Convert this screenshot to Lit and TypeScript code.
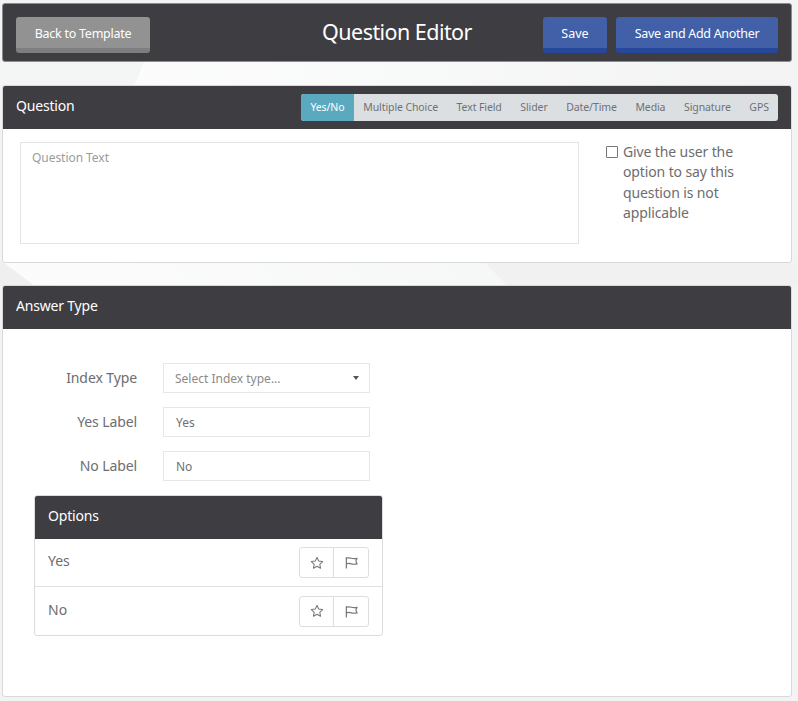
import { LitElement, html, css } from "lit";
import { customElement } from "lit/decorators.js";

const star = html`<svg class="ic" viewBox="0 0 16 16" width="14" height="14" fill="none" stroke="#777" stroke-width="1.2" stroke-linejoin="round"><path d="M8 1.6l1.95 4.2 4.55.55-3.35 3.1.9 4.500L8 11.700l-4.050 2.250.9-4.500L1.500 6.350l4.550-.550z"/></svg>`;
const flag = html`<svg class="ic" viewBox="0 0 16 16" width="15" height="15" fill="none" stroke="#777" stroke-width="1.3" stroke-linejoin="round"><path d="M2.500 2.500v12M2.500 3.500c2-1 4-.5 5.500 0s3.500.5 6 0c-.8 1-1.200 2-1.200 3s.4 2 1.200 3c-2.500.5-4.500.5-6 0s-3.500-1-5.500 0"/></svg>`;

@customElement("app-root")
export class AppRoot extends LitElement {
  static styles = css`
    :host {
      display: block;
      width: 798px;
      height: 701px;
      overflow: hidden;
      box-sizing: border-box;
      padding: 3px 6px 0 2px;
      font-family: "Noto Sans", "Open Sans", sans-serif;
      color: #6a6a6c;
      background-color: #f3f3f3;
      background-repeat: no-repeat;
      background-image:
        linear-gradient(112deg, #f4f5f5 0 133px, transparent 134px),
        linear-gradient(90deg, #fcfcfc 120px, #f8f9f9 400px, #f3f3f3 798px),
        linear-gradient(217deg, transparent 33px, #efefef 34px),
        linear-gradient(46deg, #fcfcfc 0, #f6f7f7 364px, #f1f1f1 366px, #f1f1f1 100%);
      background-size: 798px 23px, 798px 23px, 60px 23px, 798px 23px;
      background-position: 0 62px, 0 62px, 0 263px, 0 263px;
    }
    * { box-sizing: border-box; }
    .panel {
      background: #fff;
      border: 1px solid #d9d9d9;
      border-radius: 3px;
      overflow: hidden;
    }
    .top {
      height: 59px;
      background: #3e3d42;
      border-color: #8c8c8f;
      display: grid;
      grid-template-columns: 1fr auto 1fr;
      align-items: center;
      padding: 5px 13px 0;
      margin-bottom: 23px;
    }
    .top h1 {
      margin: -6px 0 0;
      font-size: 21.5px;
      font-weight: 400;
      color: #fff;
      line-height: 1;
      letter-spacing: -0.55px;
    }
    .left { display: flex; }
    .right { display: flex; justify-content: flex-end; gap: 9px; }
    .btn {
      height: 36px;
      border: 0;
      border-bottom: 5px solid;
      border-radius: 3px;
      font: inherit;
      font-size: 12.5px;
      color: #fff;
      padding: 1px 0 0;
      display: flex;
      align-items: center;
      justify-content: center;
      letter-spacing: -0.3px;
    }
    .grey { background: #929292; border-color: #7e7e7e; width: 134px; letter-spacing: -0.25px; }
    .blue { background: #4160a8; border-color: #27479b; width: 162px; }
    .blue.small { width: 64px; letter-spacing: 0; }
    .head {
      background: #3e3d42;
      color: #fff;
      display: flex;
      align-items: center;
      justify-content: space-between;
      font-size: 14px;
      height: 43px;
      padding: 0 13px;
      letter-spacing: -0.2px;
    }
    .head > span { padding-bottom: 4px; }
    .q { height: 178px; margin-bottom: 22px; }
    .tabs {
      display: flex;
      background: #dcdfe2;
      border-radius: 3px;
      height: 27px;
      width: 477px;
      font-size: 10.5px;
      color: #6f7175;
      align-items: center;
      overflow: hidden;
      letter-spacing: -0.1px;
    }
    .tab { flex: none; padding: 0 9.300px; white-space: nowrap; line-height: 27px; }
    .tab.on { background: #5aa9bf; color: #fff; width: 53px; padding: 0; text-align: center; }
    .qbody { display: flex; padding: 13px 18px 0 17px; gap: 27px; }
    .ta {
      width: 559px;
      height: 102px;
      border: 1px solid #e4e4e4;
      font-size: 12px;
      color: #9b9b9b;
      padding: 7px 11px;
      line-height: 16px;
      flex: none;
      letter-spacing: -0.05px;
    }
    .check { display: flex; gap: 5px; font-size: 14px; line-height: 20.400px; width: 134px; color: #6d6d6f; flex: none; letter-spacing: -0.12px; }
    .box { width: 12px; height: 12px; border: 1px solid #777; border-radius: 1px; flex: none; margin-top: 4px; }
    .a { height: 412px; }
    .abody { padding: 34px 31px 0; }
    .row { display: flex; align-items: center; margin-bottom: 14px; height: 30px; }
    .row label { width: 103px; text-align: right; font-size: 14px; color: #6d6d6f; letter-spacing: -0.1px; padding-bottom: 1px; }
    .field {
      margin-left: 26px;
      width: 207px;
      height: 30px;
      border: 1px solid #e6e6e6;
      display: flex;
      align-items: center;
      justify-content: space-between;
      padding: 0 11px 0 12px;
      font-size: 12px;
      color: #707072;
    }
    .field.ph { color: #8a8a8c; padding-left: 11px; }
    .caret { width: 0; height: 0; border: 3.500px solid transparent; border-top: 4px solid #555; border-bottom: 0; margin-right: -1px; }
    .options { width: 349px; height: 141px; border-color: #dcdcdc; }
    .opt {
      display: flex;
      align-items: center;
      justify-content: space-between;
      padding: 0 13px;
      font-size: 14px;
      height: 48px;
      border-bottom: 1px solid #e0e0e0;
      color: #6d6d6f;
    }
    .opt:last-child { border-bottom: 0; }
    .opt > span { padding-bottom: 4px; }
    .group { display: flex; border: 1px solid #dedede; border-radius: 3px; height: 31px; }
    .group div { width: 34px; display: flex; align-items: center; justify-content: center; }
    .group div:first-child { width: 33px; }
    .group div + div { border-left: 1px solid #dedede; width: 35px; }
  `;

  render() {
    const tabs = ["Multiple Choice", "Text Field", "Slider", "Date/Time", "Media", "Signature", "GPS"];
    return html`
      <div class="panel top">
        <div class="left"><div class="btn grey">Back to Template</div></div>
        <h1>Question Editor</h1>
        <div class="right">
          <div class="btn blue small">Save</div>
          <div class="btn blue">Save and Add Another</div>
        </div>
      </div>
      <div class="panel q">
        <div class="head">
          <span>Question</span>
          <div class="tabs">
            <div class="tab on">Yes/No</div>
            ${tabs.map((t) => html`<div class="tab">${t}</div>`)}
          </div>
        </div>
        <div class="qbody">
          <div class="ta">Question Text</div>
          <div class="check">
            <div class="box"></div>
            <div>Give the user the option to say this question is not applicable</div>
          </div>
        </div>
      </div>
      <div class="panel a">
        <div class="head"><span>Answer Type</span></div>
        <div class="abody">
          <div class="row"><label>Index Type</label><div class="field ph">Select Index type...<i class="caret"></i></div></div>
          <div class="row"><label>Yes Label</label><div class="field">Yes</div></div>
          <div class="row"><label>No Label</label><div class="field">No</div></div>
          <div class="panel options">
            <div class="head"><span>Options</span></div>
            ${["Yes", "No"].map(
              (o) => html`<div class="opt"><span>${o}</span><div class="group"><div>${star}</div><div>${flag}</div></div></div>`
            )}
          </div>
        </div>
      </div>
    `;
  }
}
